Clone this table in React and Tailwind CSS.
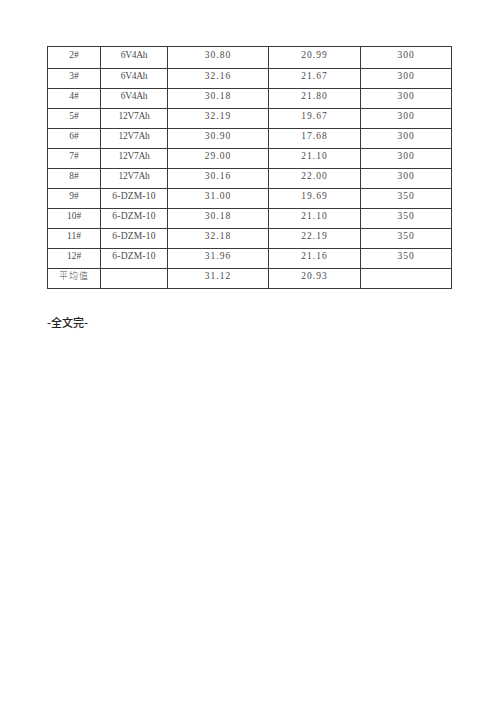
const rows = [
    ['2#', '6V4Ah', '30.80', '20.99', '300'],
    ['3#', '6V4Ah', '32.16', '21.67', '300'],
    ['4#', '6V4Ah', '30.18', '21.80', '300'],
    ['5#', '12V7Ah', '32.19', '19.67', '300'],
    ['6#', '12V7Ah', '30.90', '17.68', '300'],
    ['7#', '12V7Ah', '29.00', '21.10', '300'],
    ['8#', '12V7Ah', '30.16', '22.00', '300'],
    ['9#', '6-DZM-10', '31.00', '19.69', '350'],
    ['10#', '6-DZM-10', '30.18', '21.10', '350'],
    ['11#', '6-DZM-10', '32.18', '22.19', '350'],
    ['12#', '6-DZM-10', '31.96', '21.16', '350'],
    ['平均值', '', '31.12', '20.93', ''],
];

const widths = ['w-[53px]', 'w-[67px]', 'w-[101px]', 'w-[92px]', 'w-[91px]'];

function cellFont(value, col) {
    if (/^[\u4e00-\u9fff]/.test(value)) return "font-['Noto_Sans_CJK_SC',sans-serif] text-[9px] tracking-[1px] font-light";
    if (col === 1 && !value.startsWith('6-')) return "font-['Liberation_Serif',serif] text-[9.5px] tracking-[-0.3px]";
    if (col === 1) return "font-['Liberation_Serif',serif] text-[9.5px] tracking-[0.2px]";
    if (col === 0) return "font-['Liberation_Serif',serif] text-[9.5px]";
    // numbers: monospaced-looking digits with a wide dot
    return "font-['Liberation_Serif',serif] text-[9.5px] tracking-[1px]";
}

function Cell({ value, col, first }) {
    return (
        <td className={`${widths[col]} border border-[#3a3a3a] align-top text-center p-0 ${first ? 'pt-[1px] h-[22px]' : 'h-[20px]'}`}>
            <span className={`${cellFont(value, col)} leading-[14px] text-[#4a4a4a] block`}>{value}</span>
        </td>
    );
}

export default function App() {
    return (
        <div className="bg-white w-[500px] h-[707px] pt-[46px] pl-[47px]">
            <table className="border-collapse table-fixed w-[405px] border border-[#2e2e2e]">
                <tbody>
                    {rows.map((r, i) => (
                        <tr key={i}>
                            {r.map((v, j) => (
                                <Cell key={j} value={v} col={j} first={i === 0} />
                            ))}
                        </tr>
                    ))}
                </tbody>
            </table>
            <p className="mt-[25px] text-[11px] leading-[16px] font-['Noto_Sans_CJK_SC',sans-serif] font-medium text-[#222]">
                -全文完-
            </p>
        </div>
    );
}
